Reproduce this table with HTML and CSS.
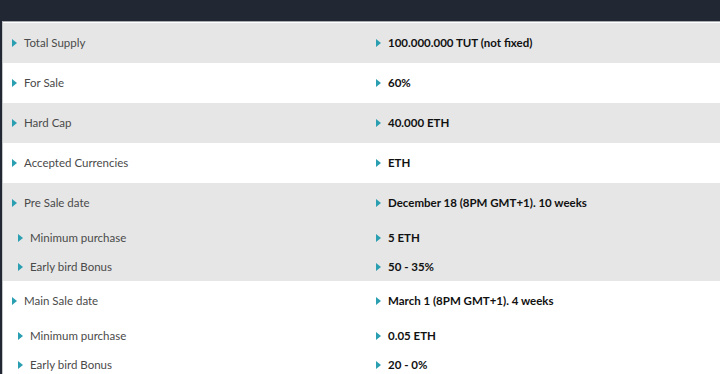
FILE: index.html
```html
<!DOCTYPE html>
<html>
<head>
<meta charset="utf-8">
<link rel="stylesheet" href="styles.css">
</head>
<body>
<div class="topbar"></div>
<div class="page">
  <div class="table">
    <div class="group gray">
      <div class="row"><div class="cell label"><span class="tri"></span>Total Supply</div><div class="cell value"><span class="tri"></span>100.000.000 TUT (not fixed)</div></div>
    </div>
    <div class="group">
      <div class="row"><div class="cell label"><span class="tri"></span>For Sale</div><div class="cell value"><span class="tri"></span>60%</div></div>
    </div>
    <div class="group gray">
      <div class="row"><div class="cell label"><span class="tri"></span>Hard Cap</div><div class="cell value"><span class="tri"></span>40.000 ETH</div></div>
    </div>
    <div class="group">
      <div class="row"><div class="cell label"><span class="tri"></span>Accepted Currencies</div><div class="cell value"><span class="tri"></span>ETH</div></div>
    </div>
    <div class="group gray">
      <div class="row"><div class="cell label"><span class="tri"></span>Pre Sale date</div><div class="cell value"><span class="tri"></span>December 18 (8PM GMT+1). 10 weeks</div></div>
      <div class="row sub"><div class="cell label"><span class="tri"></span>Minimum purchase</div><div class="cell value"><span class="tri"></span>5 ETH</div></div>
      <div class="row sub last"><div class="cell label"><span class="tri"></span>Early bird Bonus</div><div class="cell value"><span class="tri"></span>50 - 35%</div></div>
    </div>
    <div class="group">
      <div class="row"><div class="cell label"><span class="tri"></span>Main Sale date</div><div class="cell value"><span class="tri"></span>March 1 (8PM GMT+1). 4 weeks</div></div>
      <div class="row sub"><div class="cell label"><span class="tri"></span>Minimum purchase</div><div class="cell value"><span class="tri"></span>0.05 ETH</div></div>
      <div class="row sub last"><div class="cell label"><span class="tri"></span>Early bird Bonus</div><div class="cell value"><span class="tri"></span>20 - 0%</div></div>
    </div>
  </div>
</div>
</body>
</html>
```

FILE: styles.css
```css
html, body {
  margin: 0;
  padding: 0;
  background: #ffffff;
  font-family: Lato, "Open Sans", sans-serif;
  font-size: 11.5px;
}
.topbar {
  height: 21px;
  background: #212733;
}
.page {
  border-left: 2px solid #212733;
  min-height: 360px;
}
.table {
  border-top: 1px solid #a9abae;
  border-left: 1px solid #c4c6c8;
  padding: 1px 0 0 0;
}
.group.gray {
  background: #e6e6e6;
}
.row {
  display: grid;
  grid-template-columns: 373px 1fr;
  height: 40px;
  align-items: center;
}
.row.sub {
  height: 29px;
}
.group.gray .row.sub.last {
  align-items: start;
  padding-top: 7px;
  box-sizing: border-box;
}
.cell {
  display: flex;
  align-items: center;
  line-height: 16px;
}
.label {
  padding-left: 9px;
  color: #4a4a4a;
}
.sub .label {
  padding-left: 15px;
}
.value {
  color: #111111;
  font-weight: 700;
}
.tri {
  display: inline-block;
  width: 0;
  height: 0;
  border-top: 4.5px solid transparent;
  border-bottom: 4.5px solid transparent;
  border-left: 5px solid #2a9fb2;
  margin-right: 7px;
}
.value .tri {
  margin-right: 7px;
}
```
